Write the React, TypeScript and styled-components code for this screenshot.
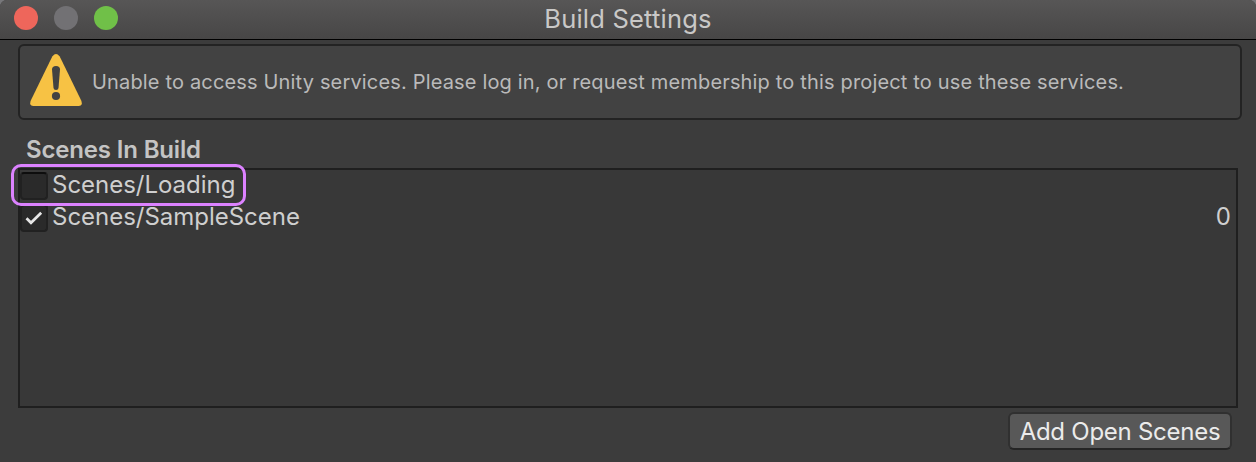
import React from "react";
import styled, { createGlobalStyle } from "styled-components";

const GlobalStyle = createGlobalStyle`
  * { box-sizing: border-box; }
  body {
    margin: 0;
    background: #77777a;
    font-family: Inter, "Liberation Sans", sans-serif;
    color: #cfcfcf;
  }
`;

const Window = styled.div`
  width: 1256px;
  height: 462px;
  overflow: hidden;
  border-radius: 7px 7px 0 0;
  background: #3c3c3c;
  display: flex;
  flex-direction: column;
`;

const TitleBar = styled.header`
  height: 40px;
  flex: none;
  display: grid;
  grid-template-columns: 1fr auto 1fr;
  background: linear-gradient(#575656, #474646);
  border-bottom: 1px solid #000;
`;

const Lights = styled.div`
  display: flex;
  gap: 16px;
  padding: 6px 0 0 14px;
`;

const Light = styled.span<{ $color: string }>`
  width: 24px;
  height: 24px;
  border-radius: 50%;
  background: ${(p) => p.$color};
`;

const Title = styled.h1`
  margin: 0;
  font-size: 25.5px;
  font-weight: 400;
  line-height: 38px;
  letter-spacing: 0.2px;
  color: #c9c8c7;
`;

const Content = styled.main`
  display: flex;
  flex-direction: column;
  padding: 4px 18px 0;
`;

const HelpBox = styled.section`
  width: 1224px;
  height: 76px;
  display: flex;
  align-items: flex-start;
  border: 2px solid #232323;
  border-radius: 6px;
  background: #424242;
  padding: 8px 0 0 10px;
  gap: 10px;
`;

const HelpText = styled.p`
  margin: 0;
  font-size: 20px;
  line-height: 24px;
  padding-top: 16px;
  letter-spacing: 0.165px;
  white-space: nowrap;
  color: #bababa;
`;

const Heading = styled.h2`
  margin: 14px 0 0 8px;
  height: 34px;
  font-size: 24px;
  font-weight: 600;
  line-height: 32px;
  letter-spacing: -0.16px;
  color: #c4c4c4;
`;

const SceneList = styled.div`
  width: 1220px;
  height: 240px;
  border: 2px solid #1f1f1f;
  background: #383838;
`;

const SceneRow = styled.div`
  position: relative;
  height: 32px;
  display: flex;
  align-items: flex-start;
  padding-right: 5px;
`;

const Checkbox = styled.span`
  width: 28px;
  height: 28px;
  margin: 2px 4px 0 0;
  border: 2px solid #212121;
  border-top-color: #0d0d0d;
  border-radius: 4px;
  background: #2a2a2a;
  display: grid;
  place-items: center;
`;

const SceneName = styled.span`
  flex: 1;
  font-size: 24px;
  line-height: 30px;
  letter-spacing: -0.02px;
`;

const SceneIndex = styled.span`
  font-size: 24px;
  line-height: 30px;
`;

const Highlight = styled.div`
  position: absolute;
  left: -9px;
  top: -6px;
  width: 235px;
  height: 42px;
  border: 3px solid #dc82ff;
  border-radius: 10px;
  z-index: 1;
`;

const AddButton = styled.button`
  align-self: flex-end;
  width: 224px;
  height: 38px;
  margin: 4px 6px 0 0;
  padding: 1px 0 0;
  border: 2px solid #303030;
  border-bottom-color: #242424;
  border-radius: 6px;
  background: #585858;
  color: #ebebeb;
  font-family: inherit;
  font-size: 24px;
  line-height: 34px;
  letter-spacing: -0.26px;
  white-space: nowrap;
`;

const WarningIcon = () => (
  <svg width="52" height="52" viewBox="0 0 52 52">
    <path
      d="M22.5 2.2Q26-2.2 29.5 2.2Q30.5 3.8 51.2 46.5Q53.2 51.8 48.5 52H3.5Q-1.2 51.8.8 46.5Q21.5 3.8 22.5 2.2Z"
      fill="#f7c244"
    />
    <path d="M22 15.5Q22 12 26 12Q30 12 30 15.5L28.5 34Q28.3 36 26 36Q23.7 36 23.5 34Z" fill="#424242" />
    <circle cx="26" cy="42" r="4.1" fill="#424242" />
  </svg>
);

const CheckIcon = () => (
  <svg width="18" height="14" viewBox="0 0 18 14">
    <path d="M1.5 7.2L6 11.8L16.2 1.8" fill="none" stroke="#e6e6e6" strokeWidth="2.7" />
  </svg>
);

const scenes = [
  { name: "Scenes/Loading", checked: false, highlighted: true },
  { name: "Scenes/SampleScene", checked: true, index: 0 },
];

export default function App() {
  return (
    <>
      <GlobalStyle />
      <Window>
        <TitleBar>
          <Lights>
            <Light $color="#ee665b" />
            <Light $color="#727174" />
            <Light $color="#70c048" />
          </Lights>
          <Title>Build Settings</Title>
        </TitleBar>
        <Content>
          <HelpBox>
            <WarningIcon />
            <HelpText>
              Unable to access Unity services. Please log in, or request membership to this project to use these
              services.
            </HelpText>
          </HelpBox>
          <Heading>Scenes In Build</Heading>
          <SceneList>
            {scenes.map((scene) => (
              <SceneRow key={scene.name}>
                <Checkbox>{scene.checked && <CheckIcon />}</Checkbox>
                <SceneName>{scene.name}</SceneName>
                {scene.index !== undefined && <SceneIndex>{scene.index}</SceneIndex>}
                {scene.highlighted && <Highlight />}
              </SceneRow>
            ))}
          </SceneList>
          <AddButton>Add Open Scenes</AddButton>
        </Content>
      </Window>
    </>
  );
}
